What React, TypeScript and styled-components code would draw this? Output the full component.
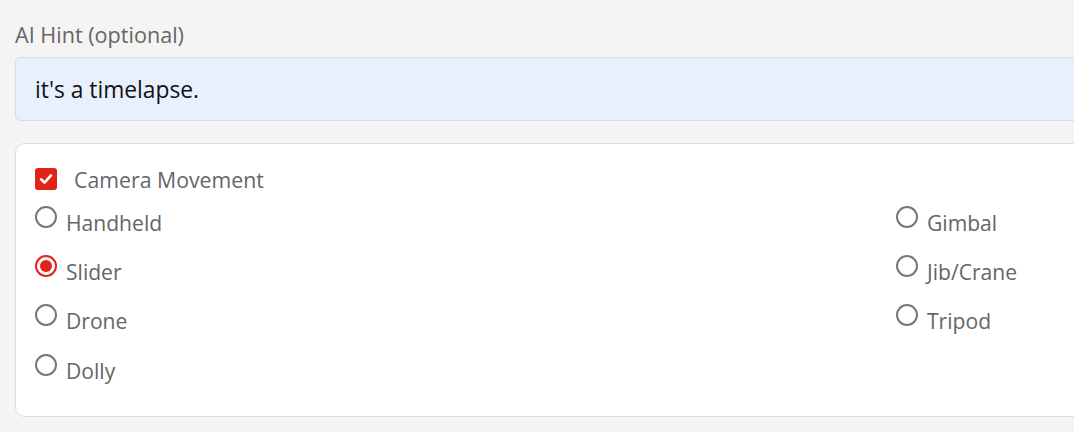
import React from "react";
import styled, { createGlobalStyle } from "styled-components";

const Global = createGlobalStyle`
  html, body { margin: 0; padding: 0; background: #f4f4f4; overflow: hidden; }
  body { font-family: "Open Sans", "Noto Sans", sans-serif; }
`;

const Page = styled.div`
  width: 1800px;
  padding: 21px 0 0 15px;
  display: flex;
  flex-direction: column;
`;

const FieldLabel = styled.label`
  font-size: 21.6px;
  line-height: 28px;
  color: #666;
  margin-bottom: 8px;
`;

const HintInput = styled.div`
  box-sizing: border-box;
  height: 64px;
  background: #e8f0fe;
  border: 1px solid #dcdcdc;
  border-radius: 6px;
  padding: 0 19px;
  display: flex;
  align-items: center;
  font-size: 22.8px;
  color: #111;
  margin-bottom: 22px;
`;

const Card = styled.div`
  box-sizing: border-box;
  background: #fff;
  border: 1px solid #dcdcdc;
  border-radius: 10px;
  padding: 21px 19px 21px;
`;

const HeaderRow = styled.div`
  display: flex;
  align-items: center;
  gap: 17px;
  font-size: 21.3px;
  color: #666;
  height: 28px;
  margin-bottom: 5px;
`;

const CheckBox = styled.span`
  width: 22px;
  height: 22px;
  border-radius: 3px;
  background: #e2231a;
  display: flex;
  align-items: center;
  justify-content: center;
`;

const Options = styled.div`
  display: grid;
  grid-template-columns: 861px 1fr;
  grid-auto-rows: 49.2px;
`;

const Option = styled.div`
  display: flex;
  align-items: center;
  gap: 9px;
  font-size: 21.1px;
  color: #666;
`;

const Radio = styled.span<{ $on?: boolean }>`
  box-sizing: border-box;
  width: 22px;
  height: 22px;
  border-radius: 50%;
  border: 2px solid ${(p) => (p.$on ? "#e2231a" : "#777")};
  display: flex;
  align-items: center;
  justify-content: center;
  margin-top: -11px;
  &::after {
    content: "";
    width: 12px;
    height: 12px;
    border-radius: 50%;
    background: ${(p) => (p.$on ? "#e2231a" : "transparent")};
  }
`;

const items = [
  ["Handheld", false],
  ["Gimbal", false],
  ["Slider", true],
  ["Jib/Crane", false],
  ["Drone", false],
  ["Tripod", false],
  ["Dolly", false],
] as const;

export default function App() {
  return (
    <>
      <Global />
      <Page>
        <FieldLabel>AI Hint (optional)</FieldLabel>
        <HintInput>it's a timelapse.</HintInput>
        <Card>
          <HeaderRow>
            <CheckBox>
              <svg width="16" height="16" viewBox="0 0 16 16">
                <path d="M3 8.3 L6.5 11.6 L13 4.4" fill="none" stroke="#fff" strokeWidth="2.6" strokeLinecap="round" strokeLinejoin="round" />
              </svg>
            </CheckBox>
            Camera Movement
          </HeaderRow>
          <Options>
            {items.map(([name, on]) => (
              <Option key={name}>
                <Radio $on={on} />
                {name}
              </Option>
            ))}
          </Options>
        </Card>
      </Page>
    </>
  );
}
